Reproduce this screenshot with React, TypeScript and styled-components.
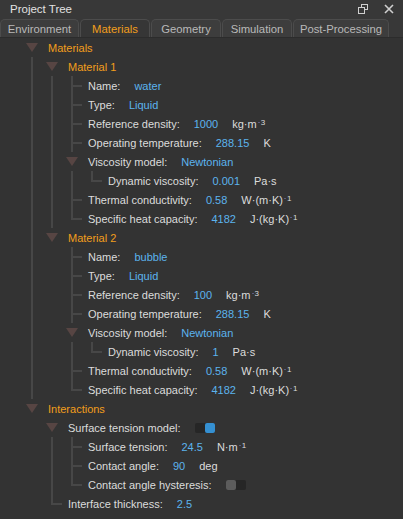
import * as React from "react";
import styled, { createGlobalStyle } from "styled-components";

const GlobalStyle = createGlobalStyle`
  html, body {
    margin: 0;
    padding: 0;
    background: #333333;
  }
  body {
    font-family: "Liberation Sans", Arial, sans-serif;
    font-size: 11px;
    color: #dcdcdc;
  }
`;

const Panel = styled.div`
  width: 403px;
  height: 519px;
  background: #333333;
  overflow: hidden;
  display: flex;
  flex-direction: column;
`;

const TitleBar = styled.div`
  height: 17px;
  display: flex;
  align-items: center;
  padding: 0 9px 0 10px;
  background: #383838;
  color: #e2e2e2;
  font-size: 11.5px;
`;

const Title = styled.div`
  flex: 1;
`;

const TitleButtons = styled.div`
  display: flex;
  align-items: center;
  gap: 16px;
`;

const TabBar = styled.div`
  height: 20px;
  display: flex;
  align-items: flex-end;
  background: #383838;
  border-bottom: 1px solid #2c2c2c;
`;

const Tab = styled.div<{ $active?: boolean; $w: number }>`
  width: ${(p) => p.$w}px;
  height: 18px;
  box-sizing: border-box;
  margin-right: 1px;
  display: flex;
  align-items: center;
  justify-content: center;
  border: 1px solid #4c4c4c;
  border-bottom: none;
  border-radius: 5px 5px 0 0;
  background: ${(p) => (p.$active ? "#363636" : "#3d3d3d")};
  color: ${(p) => (p.$active ? "#f29e1c" : "#b9b9b9")};
  font-size: 11.3px;
  white-space: nowrap;
`;

const Tree = styled.div`
  display: flex;
  flex-direction: column;
  padding-left: 22px;
`;

const Row = styled.div`
  height: 19px;
  display: flex;
  align-items: center;
`;

const Cell = styled.div`
  position: relative;
  width: 20px;
  height: 19px;
  flex-shrink: 0;
`;

const VLine = styled.div<{ $half?: boolean }>`
  position: absolute;
  left: 9px;
  top: 0;
  width: 2px;
  height: ${(p) => (p.$half ? "10px" : "19px")};
  background: #474747;
`;

const HLine = styled.div`
  position: absolute;
  left: 9px;
  top: 9px;
  width: 11px;
  height: 2px;
  background: #474747;
`;

const Arrow = styled.div`
  position: absolute;
  left: 4px;
  top: 5px;
  width: 0;
  height: 0;
  border-left: 6px solid transparent;
  border-right: 6px solid transparent;
  border-top: 9px solid #574543;
`;

const Content = styled.div`
  display: flex;
  align-items: center;
  gap: 14px;
  padding-left: 6px;
  white-space: nowrap;
`;

const Header = styled.span`
  color: #f29e1c;
`;

const Label = styled.span`
  color: #dcdcdc;
`;

const Value = styled.span`
  color: #5cb3ee;
`;

const Unit = styled.span`
  display: inline-flex;
  align-items: flex-start;
  color: #dcdcdc;
`;

const Sup = styled.span`
  display: inline-flex;
  align-items: center;
  font-size: 8px;
  line-height: 8px;
  margin-top: 1px;
  margin-left: 1px;
`;

const Minus = styled.span`
  display: inline-block;
  width: 2px;
  height: 1px;
  margin-right: 1px;
  background: #5a5a80;
`;

const ToggleBox = styled.div<{ $on: boolean }>`
  width: 20px;
  height: 10px;
  display: flex;
  justify-content: ${(p) => (p.$on ? "flex-end" : "flex-start")};
  background: #262626;
  border-radius: 2px;
`;

const Knob = styled.div<{ $on: boolean }>`
  width: 10px;
  height: 10px;
  border-radius: 2px;
  background: ${(p) => (p.$on ? "#3590d2" : "#5c5c5c")};
`;

type CellKind = "none" | "pipe" | "tee" | "elbow" | "arrow";

const TreeCell = ({ kind }: { kind: CellKind }) => (
  <Cell>
    {kind === "pipe" && <VLine />}
    {kind === "tee" && (
      <>
        <VLine />
        <HLine />
      </>
    )}
    {kind === "elbow" && (
      <>
        <VLine $half />
        <HLine />
      </>
    )}
    {kind === "arrow" && <Arrow />}
  </Cell>
);

const Toggle = ({ on }: { on: boolean }) => (
  <ToggleBox $on={on}>
    <Knob $on={on} />
  </ToggleBox>
);

const sup = (n: string) => (
  <Sup>
    <Minus />
    {n}
  </Sup>
);

type Item = {
  cells: CellKind[];
  header?: string;
  label?: string;
  value?: string;
  unit?: React.ReactNode;
  toggle?: boolean;
};

const material = (title: string, name: string, density: string, visc: string, last: boolean): Item[] => {
  const c = last ? "none" : "pipe";
  return [
    { cells: ["pipe", "arrow"], header: title },
    { cells: ["pipe", c, "tee"], label: "Name:", value: name },
    { cells: ["pipe", c, "tee"], label: "Type:", value: "Liquid" },
    { cells: ["pipe", c, "tee"], label: "Reference density:", value: density, unit: <>kg·m{sup("3")}</> },
    { cells: ["pipe", c, "tee"], label: "Operating temperature:", value: "288.15", unit: "K" },
    { cells: ["pipe", c, "arrow"], label: "Viscosity model:", value: "Newtonian" },
    { cells: ["pipe", c, "pipe", "elbow"], label: "Dynamic viscosity:", value: visc, unit: "Pa·s" },
    { cells: ["pipe", c, "tee"], label: "Thermal conductivity:", value: "0.58", unit: <>W·(m·K){sup("1")}</> },
    { cells: ["pipe", c, "elbow"], label: "Specific heat capacity:", value: "4182", unit: <>J·(kg·K){sup("1")}</> },
  ];
};

const items: Item[] = [
  { cells: ["arrow"], header: "Materials" },
  ...material("Material 1", "water", "1000", "0.001", false),
  ...material("Material 2", "bubble", "100", "1", true),
  { cells: ["arrow"], header: "Interactions" },
  { cells: ["none", "arrow"], label: "Surface tension model:", toggle: true },
  { cells: ["none", "pipe", "tee"], label: "Surface tension:", value: "24.5", unit: <>N·m{sup("1")}</> },
  { cells: ["none", "pipe", "tee"], label: "Contact angle:", value: "90", unit: "deg" },
  { cells: ["none", "pipe", "elbow"], label: "Contact angle hysteresis:", toggle: false },
  { cells: ["none", "elbow"], label: "Interface thickness:", value: "2.5" },
];

const tabs = [
  { name: "Environment", w: 79 },
  { name: "Materials", w: 70, active: true },
  { name: "Geometry", w: 70 },
  { name: "Simulation", w: 70 },
  { name: "Post-Processing", w: 96 },
];

const App: React.FC = () => {
  return (
    <>
      <GlobalStyle />
      <Panel>
        <TitleBar>
          <Title>Project Tree</Title>
          <TitleButtons>
            <svg width="10" height="10" viewBox="0 0 10 10">
              <rect x="3.5" y="0.5" width="6" height="5" fill="none" stroke="#cfcfcf" />
              <rect x="0.5" y="3.5" width="6" height="6" fill="#383838" stroke="#cfcfcf" />
            </svg>
            <svg width="10" height="10" viewBox="0 0 10 10">
              <path d="M1 1 L9 9 M9 1 L1 9" stroke="#cfcfcf" strokeWidth="1.6" />
            </svg>
          </TitleButtons>
        </TitleBar>
        <TabBar>
          {tabs.map((t) => (
            <Tab key={t.name} $w={t.w} $active={t.active}>
              {t.name}
            </Tab>
          ))}
        </TabBar>
        <Tree>
          {items.map((it, i) => (
            <Row key={i}>
              {it.cells.map((k, j) => (
                <TreeCell key={j} kind={k} />
              ))}
              <Content>
                {it.header && <Header>{it.header}</Header>}
                {it.label && <Label>{it.label}</Label>}
                {it.value && <Value>{it.value}</Value>}
                {it.unit && <Unit>{it.unit}</Unit>}
                {it.toggle !== undefined && <Toggle on={it.toggle} />}
              </Content>
            </Row>
          ))}
        </Tree>
      </Panel>
    </>
  );
};

export default App;
